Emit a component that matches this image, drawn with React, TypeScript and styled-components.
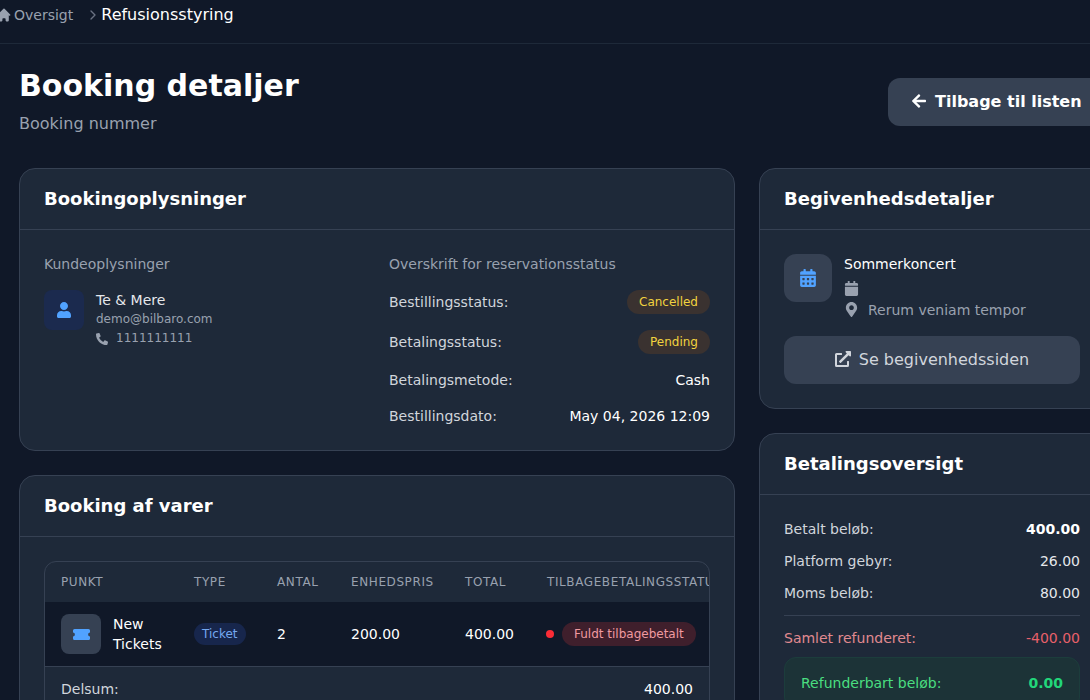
import styled, { createGlobalStyle } from "styled-components";
import {
  FaArrowLeft,
  FaCalendar,
  FaCalendarAlt,
  FaExternalLinkAlt,
  FaMapMarkerAlt,
  FaPhoneAlt,
  FaUser,
} from "react-icons/fa";
import { HiHome } from "react-icons/hi";
import { ChevronRight } from "lucide-react";

const GlobalStyle = createGlobalStyle`
  html, body {
    margin: 0;
    height: 100%;
    background: #101828;
    overflow: hidden;
  }
  body {
    font-family: "DejaVu Sans", sans-serif;
    color: #fff;
  }
  * { box-sizing: border-box; }
`;

// Fixed canvas, the content runs past the right edge of the window
const Page = styled.div`
  width: 1117px;
  height: 700px;
  overflow: hidden;
`;

const Breadcrumb = styled.nav`
  height: 44px;
  padding: 0 0 14px 0;
  margin-left: -4px;
  display: flex;
  align-items: center;
  border-bottom: 1px solid #1e2939;
`;

const Crumb = styled.span`
  display: flex;
  align-items: center;
  gap: 2px;
  font-size: 14px;
  color: #99a1af;
`;

const Separator = styled.span`
  display: flex;
  margin: 0 0 0 12px;
  color: #6a7282;
`;

const CurrentCrumb = styled.span`
  font-size: 16px;
  color: #fff;
`;

const Main = styled.main`
  padding: 24px 0 0 19px;
`;

const Header = styled.header`
  display: flex;
  justify-content: space-between;
  align-items: center;
  height: 68px;
  margin-bottom: 32px;
`;

const Title = styled.h1`
  margin: 0 0 8px;
  font-size: 30px;
  line-height: 36px;
  font-weight: 700;
`;

const Subtitle = styled.p`
  margin: 0;
  font-size: 16px;
  line-height: 24px;
  color: #99a1af;
`;

const BackButton = styled.button`
  display: flex;
  align-items: center;
  gap: 8px;
  height: 48px;
  width: 229px;
  padding: 0 0 2px 23px;
  border: 0;
  border-radius: 12px;
  background: #364153;
  color: #fff;
  font-family: inherit;
  font-size: 16px;
  font-weight: 700;
`;

const Columns = styled.div`
  display: grid;
  grid-template-columns: 716px 358px;
  gap: 24px;
  align-items: start;
`;

const Column = styled.div`
  display: flex;
  flex-direction: column;
  gap: 24px;
`;

const Card = styled.section`
  border: 1px solid #364153;
  border-radius: 16px;
  background: #1e2939;
`;

const CardHeader = styled.h2`
  margin: 0;
  height: 61px;
  padding: 0 24px 2px;
  display: flex;
  align-items: center;
  border-bottom: 1px solid #364153;
  font-size: 18px;
  font-weight: 700;
`;

const CardBody = styled.div`
  padding: 24px;
`;

const InfoGrid = styled.div`
  display: grid;
  grid-template-columns: 321px 321px;
  gap: 24px;
  height: 172px;
`;

const SectionLabel = styled.div<{ $gap: number }>`
  font-size: 14px;
  line-height: 20px;
  color: #99a1af;
  margin-bottom: ${(p) => p.$gap}px;
`;

const CustomerRow = styled.div`
  display: flex;
  gap: 12px;
`;

const IconTile = styled.div<{ $bg: string; $size: number; $radius: number }>`
  width: ${(p) => p.$size}px;
  height: ${(p) => p.$size}px;
  flex: none;
  border-radius: ${(p) => p.$radius}px;
  background: ${(p) => p.$bg};
  color: #51a2ff;
  display: flex;
  align-items: center;
  justify-content: center;
`;

const CustomerName = styled.div`
  font-size: 14px;
  line-height: 20px;
  color: #e5e7eb;
`;

const SmallLine = styled.div`
  display: flex;
  align-items: center;
  gap: 8px;
  font-size: 12px;
  line-height: 19px;
  color: #99a1af;
`;

const StatusRow = styled.div<{ $height: number }>`
  height: ${(p) => p.$height}px;
  display: flex;
  align-items: center;
  justify-content: space-between;
  font-size: 14px;
  color: #d1d5dc;
`;

const StatusValue = styled.span`
  color: #fff;
`;

const Pill = styled.span<{ $bg: string; $color: string; $compact?: boolean }>`
  display: inline-flex;
  align-items: center;
  height: ${(p) => (p.$compact ? 22 : 24)}px;
  padding: 0 ${(p) => (p.$compact ? 8 : 12)}px;
  border-radius: 12px;
  background: ${(p) => p.$bg};
  color: ${(p) => p.$color};
  font-size: 12px;
`;

const TableWrap = styled.div`
  border: 1px solid #364153;
  border-radius: 12px;
  overflow: hidden;
`;

const ItemGrid = styled.div`
  display: grid;
  grid-template-columns: 133px 83px 74px 114px 82px 1fr;
  align-items: center;
  padding-left: 16px;
  white-space: nowrap;
`;

const HeadRow = styled(ItemGrid)`
  height: 40px;
  font-size: 12px;
  letter-spacing: 0.6px;
  color: #99a1af;
`;

const BodyRow = styled(ItemGrid)`
  height: 65px;
  background: #101828;
  border-bottom: 1px solid #364153;
  font-size: 14px;
`;

const ItemCell = styled.div`
  display: flex;
  align-items: center;
  gap: 12px;
  line-height: 20px;
  white-space: normal;
`;

const RefundCell = styled.div`
  display: flex;
  align-items: center;
  gap: 8px;
  margin-left: -1px;
  overflow: hidden;
`;

const Dot = styled.span`
  width: 8px;
  height: 8px;
  border-radius: 50%;
  background: #fb2c36;
`;

const FooterRow = styled.div`
  display: flex;
  justify-content: space-between;
  padding: 12px 16px;
  font-size: 14px;
  line-height: 20px;
  color: #d1d5dc;
`;

const FooterValue = styled.span`
  color: #fff;
`;

const EventRow = styled.div`
  display: flex;
  gap: 12px;
  margin-bottom: 16px;
`;

const EventName = styled.div`
  font-size: 14px;
  line-height: 20px;
  color: #fff;
  margin-bottom: 4px;
`;

const EventLine = styled.div`
  display: flex;
  align-items: center;
  gap: 9px;
  height: 21px;
  font-size: 14px;
  color: #99a1af;
`;

const LinkButton = styled.a`
  display: flex;
  align-items: center;
  justify-content: center;
  gap: 8px;
  width: 296px;
  height: 48px;
  padding-bottom: 2px;
  border-radius: 12px;
  background: #364153;
  color: #d1d5dc;
  font-size: 16px;
`;

const SummaryRow = styled.div<{ $color: string }>`
  display: flex;
  justify-content: space-between;
  height: 32px;
  align-items: center;
  font-size: 14px;
  color: ${(p) => p.$color};
`;

const SummaryValue = styled.span<{ $color: string; $bold?: boolean }>`
  color: ${(p) => p.$color};
  font-weight: ${(p) => (p.$bold ? 700 : 400)};
`;

const SummaryRule = styled.hr`
  border: 0;
  border-top: 1px solid #364153;
  margin: 6px 0;
`;

const RefundBox = styled.div`
  width: 296px;
  height: 52px;
  margin-top: 3px;
  padding: 0 16px;
  display: flex;
  justify-content: space-between;
  align-items: center;
  border: 1px solid #1c3d3c;
  border-radius: 12px;
  background: #1c3337;
  font-size: 14px;
  color: #4ade80;
`;

const SummaryCard = styled(CardBody)`
  padding-top: 18px;
  width: 344px;
`;

// Solid ticket with a notch on each short side
function TicketIcon() {
  return (
    <svg width="17" height="11" viewBox="0 0 17 11" fill="currentColor">
      <path d="M1.5 0h14A1.5 1.5 0 0 1 17 1.5V3.6a1.9 1.9 0 0 0 0 3.8v2.1a1.5 1.5 0 0 1-1.5 1.5h-14A1.5 1.5 0 0 1 0 9.5V7.4a1.9 1.9 0 0 0 0-3.8V1.5A1.5 1.5 0 0 1 1.5 0z" />
    </svg>
  );
}

const statusRows = [
  { label: "Betalingsmetode:", value: "Cash", height: 36 },
  { label: "Bestillingsdato:", value: "May 04, 2026 12:09", height: 36 },
];

const summaryRows = [
  { label: "Betalt beløb:", value: "400.00", bold: true, color: "#fff" },
  { label: "Platform gebyr:", value: "26.00", bold: false, color: "#e5e7eb" },
  { label: "Moms beløb:", value: "80.00", bold: false, color: "#e5e7eb" },
];

export default function App() {
  return (
    <Page>
      <GlobalStyle />
      <Breadcrumb>
        <Crumb>
          <HiHome size={16} />
          Oversigt
        </Crumb>
        <Separator>
          <ChevronRight size={16} />
        </Separator>
        <CurrentCrumb>Refusionsstyring</CurrentCrumb>
      </Breadcrumb>
      <Main>
        <Header>
          <div>
            <Title>Booking detaljer</Title>
            <Subtitle>Booking nummer</Subtitle>
          </div>
          <BackButton>
            <FaArrowLeft size={16} />
            Tilbage til listen
          </BackButton>
        </Header>
        <Columns>
          <Column>
            <Card>
              <CardHeader>Bookingoplysninger</CardHeader>
              <CardBody>
                <InfoGrid>
                  <div>
                    <SectionLabel $gap={16}>Kundeoplysninger</SectionLabel>
                    <CustomerRow>
                      <IconTile $bg="#1b2a4e" $size={40} $radius={8}>
                        <FaUser size={16} />
                      </IconTile>
                      <div>
                        <CustomerName>Te &amp; Mere</CustomerName>
                        <SmallLine>demo@bilbaro.com</SmallLine>
                        <SmallLine>
                          <FaPhoneAlt size={12} />
                          1111111111
                        </SmallLine>
                      </div>
                    </CustomerRow>
                  </div>
                  <div>
                    <SectionLabel $gap={8}>Overskrift for reservationsstatus</SectionLabel>
                    <StatusRow $height={40}>
                      Bestillingsstatus:
                      <Pill $bg="#3a3230" $color="#f2d33f">Cancelled</Pill>
                    </StatusRow>
                    <StatusRow $height={40}>
                      Betalingsstatus:
                      <Pill $bg="#3a3230" $color="#f2d33f">Pending</Pill>
                    </StatusRow>
                    {statusRows.map((row) => (
                      <StatusRow key={row.label} $height={row.height}>
                        {row.label}
                        <StatusValue>{row.value}</StatusValue>
                      </StatusRow>
                    ))}
                  </div>
                </InfoGrid>
              </CardBody>
            </Card>
            <Card>
              <CardHeader>Booking af varer</CardHeader>
              <CardBody>
                <TableWrap>
                  <HeadRow>
                    <span>PUNKT</span>
                    <span>TYPE</span>
                    <span>ANTAL</span>
                    <span>ENHEDSPRIS</span>
                    <span>TOTAL</span>
                    <span>TILBAGEBETALINGSSTATUS</span>
                  </HeadRow>
                  <BodyRow>
                    <ItemCell>
                      <IconTile $bg="#364153" $size={40} $radius={8}>
                        <TicketIcon />
                      </IconTile>
                      <span>New Tickets</span>
                    </ItemCell>
                    <span>
                      <Pill $bg="#17264c" $color="#74a8f0" $compact>Ticket</Pill>
                    </span>
                    <span>2</span>
                    <span>200.00</span>
                    <span>400.00</span>
                    <RefundCell>
                      <Dot />
                      <Pill $bg="#3f1f2c" $color="#f09aa0">Fuldt tilbagebetalt</Pill>
                    </RefundCell>
                  </BodyRow>
                  <FooterRow>
                    Delsum:
                    <FooterValue>400.00</FooterValue>
                  </FooterRow>
                </TableWrap>
              </CardBody>
            </Card>
          </Column>
          <Column>
            <Card>
              <CardHeader>Begivenhedsdetaljer</CardHeader>
              <CardBody>
                <EventRow>
                  <IconTile $bg="#364153" $size={48} $radius={12}>
                    <FaCalendarAlt size={18} />
                  </IconTile>
                  <div>
                    <EventName>Sommerkoncert</EventName>
                    <EventLine>
                      <FaCalendar size={15} />
                    </EventLine>
                    <EventLine>
                      <FaMapMarkerAlt size={15} />
                      Rerum veniam tempor
                    </EventLine>
                  </div>
                </EventRow>
                <LinkButton>
                  <FaExternalLinkAlt size={16} />
                  Se begivenhedssiden
                </LinkButton>
              </CardBody>
            </Card>
            <Card>
              <CardHeader>Betalingsoversigt</CardHeader>
              <SummaryCard>
                {summaryRows.map((row) => (
                  <SummaryRow key={row.label} $color="#d1d5dc">
                    {row.label}
                    <SummaryValue $color={row.color} $bold={row.bold}>{row.value}</SummaryValue>
                  </SummaryRow>
                ))}
                <SummaryRule />
                <SummaryRow $color="#e08a90">
                  Samlet refunderet:
                  <SummaryValue $color="#e8606a">-400.00</SummaryValue>
                </SummaryRow>
                <RefundBox>
                  Refunderbart beløb:
                  <SummaryValue $color="#22d67a" $bold>0.00</SummaryValue>
                </RefundBox>
              </SummaryCard>
            </Card>
          </Column>
        </Columns>
      </Main>
    </Page>
  );
}
